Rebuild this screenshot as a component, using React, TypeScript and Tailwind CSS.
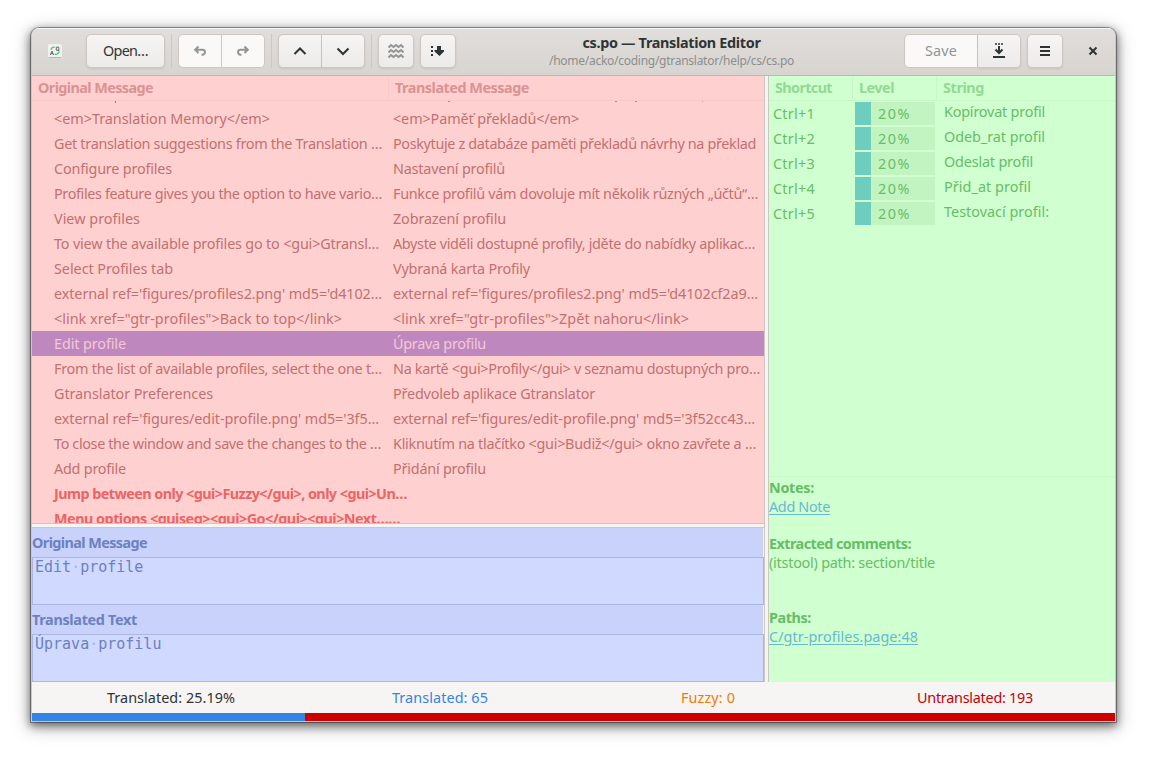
import { useLayoutEffect, useRef, useState } from "react";
import type { ReactNode } from "react";

/* Text whose tracking is adjusted so that it spans exactly `w` pixels. */
function Fit({ w, className = "", children }: { w: number; className?: string; children: string }) {
  const ref = useRef<HTMLSpanElement>(null);
  const [spacing, setSpacing] = useState(0);
  useLayoutEffect(() => {
    const el = ref.current;
    if (!el) return;
    el.style.letterSpacing = "0px";
    setSpacing((w - el.getBoundingClientRect().width) / children.length);
  }, [w, children]);
  return (
    <span ref={ref} className={`inline-block whitespace-pre ${className}`} style={{ letterSpacing: `${spacing}px` }}>
      {children}
    </span>
  );
}

type Row = [string, number, string, number];

const rows: Row[] = [
  ["<em>Translation Memory</em>", 216, "<em>Paměť překladů</em>", 186],
  ["Get translation suggestions from the Translation …", 328, "Poskytuje z databáze paměti překladů návrhy na překlad", 363],
  ["Configure profiles", 118, "Nastavení profilů", 112],
  ["Profiles feature gives you the option to have vario…", 328, "Funkce profilů vám dovoluje mít několik různých „účtů“…", 365],
  ["View profiles", 86, "Zobrazení profilu", 113],
  ["To view the available profiles go to <gui>Gtransl…", 325, "Abyste viděli dostupné profily, jděte do nabídky aplikac…", 362],
  ["Select Profiles tab", 119, "Vybraná karta Profily", 137],
  ["external ref='figures/profiles2.png' md5='d4102…", 328, "external ref='figures/profiles2.png' md5='d4102cf2a9…", 365],
  ["<link xref=\"gtr-profiles\">Back to top</link>", 288, "<link xref=\"gtr-profiles\">Zpět nahoru</link>", 296],
  ["Edit profile", 72, "Úprava profilu", 93],
  ["From the list of available profiles, select the one t…", 328, "Na kartě <gui>Profily</gui> v seznamu dostupných pro…", 367],
  ["Gtranslator Preferences", 159, "Předvoleb aplikace Gtranslator", 202],
  ["external ref='figures/edit-profile.png' md5='3f5…", 325, "external ref='figures/edit-profile.png' md5='3f52cc43…", 362],
  ["To close the window and save the changes to the …", 327, "Kliknutím na tlačítko <gui>Budiž</gui> okno zavřete a …", 363],
  ["Add profile", 72, "Přidání profilu", 93],
];

const memory: [string, string, number][] = [
  ["Ctrl+1", "Kopírovat profil", 101],
  ["Ctrl+2", "Odeb_rat profil", 101],
  ["Ctrl+3", "Odeslat profil", 89],
  ["Ctrl+4", "Přid_at profil", 87],
  ["Ctrl+5", "Testovací profil:", 105],
];

const face = "border border-[#cdc7c2] bg-linear-to-b from-[#f6f5f4] to-[#edebe9] shadow-[0_1px_2px_rgba(0,0,0,0.09)] text-[#2e3436]";
const faceOff = "border border-[#cdc7c2] bg-[#faf9f8] text-[#929595]";

function Button({ className, children }: { className: string; children: ReactNode }) {
  return <button className={`flex h-[34px] shrink-0 items-center justify-center ${className}`}>{children}</button>;
}

function Separator({ className }: { className: string }) {
  return <div className={`h-[34px] w-px shrink-0 bg-[#cdc8c3] ${className}`} />;
}

function Icon({ children }: { children: ReactNode }) {
  return (
    <svg width="16" height="16" viewBox="0 0 16 16" fill="none" stroke="currentColor" strokeWidth="2">
      {children}
    </svg>
  );
}

function HeaderBar() {
  return (
    <header className="flex h-[48px] shrink-0 items-start border-b border-[#bfb8b1] bg-linear-to-b from-[#e1dedb] to-[#d8d4d0] pt-[6px] shadow-[inset_0_1px_#f8f7f7]">
      <svg className="mt-[10px] ml-[16px] shrink-0" width="14" height="14" viewBox="0 0 14 14" fill="none">
        <rect width="14" height="13.5" rx="1.5" fill="#f1f1ef" />
        <path d="M1 13.5h12" stroke="#86d3ab" />
        <path d="M3 5.8C3.4 4 4.8 3 6.8 3.2M11 7.6C10.8 9.4 9 10.8 6.6 10.2" stroke="#33d17a" strokeWidth="1.3" />
        <path d="M2.200 11L4 7L5.600 11M3 9.700h2" stroke="#5e5c64" strokeWidth="0.9" />
        <path d="M8.300 3.200h2.500v3H8.300zM10 6.200l1.500 1" stroke="#5e5c64" strokeWidth="0.9" />
      </svg>
      <Button className={`ml-[24px] w-[79px] rounded-[5px] ${face}`}>
        <Fit w={45}>Open…</Fit>
      </Button>
      <Separator className="ml-[6px]" />
      <Button className={`ml-[6px] w-[44px] rounded-l-[5px] ${faceOff}`}>
        <Icon>
          <path d="M6.500 3.500L3.200 6.700l3.300 3.300M3.500 6.800H10.500a2.400 2.400 0 0 1 0 4.900H9.500" />
        </Icon>
      </Button>
      <Button className={`w-[43px] rounded-r-[5px] border-l-0 ${faceOff}`}>
        <Icon>
          <path d="M9.500 3.500L12.800 6.700l-3.300 3.300M12.500 6.800H5.500a2.400 2.400 0 0 0 0 4.900H6.500" />
        </Icon>
      </Button>
      <Separator className="ml-[6px]" />
      <Button className={`ml-[6px] w-[44px] rounded-l-[5px] ${face}`}>
        <Icon>
          <path d="M2.500 11L8 5.500L13.500 11" />
        </Icon>
      </Button>
      <Button className={`w-[43px] rounded-r-[5px] border-l-0 ${face}`}>
        <Icon>
          <path d="M2.500 5.500L8 11L13.500 5.500" />
        </Icon>
      </Button>
      <Separator className="ml-[6px]" />
      <Button className={`ml-[6px] w-[36px] rounded-[5px] ${face}`}>
        <svg width="16" height="16" viewBox="0 0 16 16" fill="none" stroke="#929595" strokeWidth="2">
          <path d="M0.500 4.500L3 2L5.500 4L8 2L10.500 4L13 2L15.500 4.500M0.500 9.500L3 7L5.500 9L8 7L10.500 9L13 7L15.500 9.500M0.500 14.500L3 12L5.500 14L8 12L10.500 14L13 12L15.500 14.500" />
        </svg>
      </Button>
      <Button className={`ml-[6px] w-[36px] rounded-[5px] ${face}`}>
        <svg width="16" height="16" viewBox="0 0 16 16" fill="currentColor">
          <path d="M1 3h2v2H1zM1 7h2v2H1zM1 11h2v2H1zM7 3h4v4h3v1.500L9.500 13L4.500 8.500V7H7z" />
        </svg>
      </Button>
      <div className="flex flex-1 flex-col items-center pr-[17px]">
        <Fit w={178} className="leading-[18px] font-bold text-[#2e3436]">cs.po — Translation Editor</Fit>
        <Fit w={245} className="text-[12px] leading-[17px] text-[#8b8e8f]">/home/acko/coding/gtranslator/help/cs/cs.po</Fit>
      </div>
      <Button className={`w-[74px] rounded-l-[5px] ${faceOff}`}>
        <Fit w={32}>Save</Fit>
      </Button>
      <Button className={`w-[43px] rounded-r-[5px] border-l-0 ${face}`}>
        <svg width="16" height="16" viewBox="0 0 16 16" fill="currentColor">
          <path d="M4 0h2v2H4zM7 0h2v2H7zM10 0h2v2h-2z" opacity="0.75" />
          <path d="M2 13h12v2H2z" />
          <path d="M8 3v7M4.500 6.500L8 10L11.500 6.500" fill="none" stroke="currentColor" strokeWidth="2" />
        </svg>
      </Button>
      <Button className={`ml-[6px] w-[36px] rounded-[5px] ${face}`}>
        <Icon>
          <path d="M3 4h10M3 8h10M3 12h10" />
        </Icon>
      </Button>
      <Button className="mr-[14px] ml-[22px] w-[16px] text-[#2e3436]">
        <Icon>
          <path d="M4.500 4.500L11.500 11.500M11.500 4.500L4.500 11.500" />
        </Icon>
      </Button>
    </header>
  );
}

function MessageTable() {
  return (
    <section className="flex h-[448px] shrink-0 flex-col overflow-hidden border-b border-[#cdc7c2] bg-[#ffd0d0] text-[#c17070]">
      <div className="flex h-[25px] shrink-0 items-center border-b border-[#f9c9c8] font-bold text-[#d99393]">
        <div className="flex h-full w-[357px] items-center border-r border-[#f9c9c8] pl-[6px]">
          <Fit w={115}>Original Message</Fit>
        </div>
        <div className="pl-[6px]">
          <Fit w={134}>Translated Message</Fit>
        </div>
      </div>
      <div className="flex h-[5px] shrink-0 items-start">
        <span className="ml-[83px] h-[2px] w-px bg-[#c17070]" />
        <span className="ml-[332px] h-px w-[2px] bg-[#c98080]" />
        <span className="ml-[165px] h-px w-[2px] bg-[#c98080]" />
        <span className="ml-[18px] h-px w-[2px] bg-[#c98080]" />
        <span className="ml-[65px] h-px w-px bg-[#e0a0a0]" />
      </div>
      {rows.map(([a, wa, b, wb]) => (
        <div
          key={a}
          className={`flex h-[25px] shrink-0 items-center pl-[22px] ${a === "Edit profile" ? "bg-[#be88be] text-[#f3c8d8]" : ""}`}
        >
          <div className="w-[339px]">
            <Fit w={wa}>{a}</Fit>
          </div>
          <Fit w={wb}>{b}</Fit>
        </div>
      ))}
      <div className="flex h-[25px] shrink-0 items-center pl-[22px] font-bold text-[#ec6464]">
        <Fit w={353}>{"Jump between only <gui>Fuzzy</gui>, only <gui>Un…"}</Fit>
      </div>
      <div className="flex h-[25px] shrink-0 items-center pl-[22px] font-bold text-[#ec6464]">
        <Fit w={346}>{"Menu options <guiseq><gui>Go</gui><gui>Next……"}</Fit>
      </div>
    </section>
  );
}

function Editor({ label, lw, words }: { label: string; lw: number; words: [string, string] }) {
  return (
    <div className="flex h-[77px] flex-col">
      <div className="mr-px flex h-[29px] shrink-0 items-center bg-[#c9d2fa] font-bold text-[#6d80c0]">
        <Fit w={lw}>{label}</Fit>
      </div>
      <div className="flex-1 border border-[#aab6e4] bg-[#d0d9ff] pl-[2px] font-['DejaVu_Sans_Mono',monospace] text-[15px] leading-[19px] text-[#6d80c0]">
        <span>{words[0]}</span>
        <span className="text-[#a9b5e4]">·</span>
        <span>{words[1]}</span>
      </div>
    </div>
  );
}

function SidePanel() {
  return (
    <aside className="flex flex-1 flex-col border-l border-[#cdc7c2] bg-[#d0ffd0] text-[#67bd67]">
      <div className="flex h-[401px] shrink-0 flex-col border-b border-[#c8f6c7]">
        <div className="flex h-[25px] shrink-0 items-center border-b border-[#c8f6c7] font-bold text-[#93d893]">
          <div className="flex h-full w-[84px] items-center border-r border-[#c8f6c7] pl-[6px]">
            <Fit w={57}>Shortcut</Fit>
          </div>
          <div className="flex h-full w-[84px] items-center border-r border-[#c8f6c7] pl-[6px]">
            <Fit w={35}>Level</Fit>
          </div>
          <div className="pl-[6px]">
            <Fit w={41}>String</Fit>
          </div>
        </div>
        {memory.map(([key, text, w]) => (
          <div key={key} className="flex h-[25px] shrink-0 items-center pl-[4px]">
            <div className="w-[82px]">
              <Fit w={42}>{key}</Fit>
            </div>
            <div className="flex h-[23px] w-[80px] items-center bg-[#c2f4c2]">
              <div className="h-full w-[16px] bg-[#6dcdbe]" />
              <Fit w={33} className="ml-[7px]">20%</Fit>
            </div>
            <div className="pb-[3px] pl-[9px]">
              <Fit w={w}>{text}</Fit>
            </div>
          </div>
        ))}
      </div>
      <div className="flex flex-col items-start leading-[19px]">
        <Fit w={45} className="mt-[1px] font-bold">Notes:</Fit>
        <Fit w={61} className="text-[#65bad0] underline underline-offset-2">Add Note</Fit>
        <Fit w={142} className="mt-[18px] font-bold">Extracted comments:</Fit>
        <Fit w={166}>(itstool) path: section/title</Fit>
        <Fit w={42} className="mt-[36px] font-bold">Paths:</Fit>
        <Fit w={149} className="text-[#65bad0] underline underline-offset-2">C/gtr-profiles.page:48</Fit>
      </div>
    </aside>
  );
}

function StatusBar() {
  return (
    <footer className="flex h-[39px] shrink-0 flex-col bg-[#f6f5f4]">
      <div className="flex h-[31px] items-center text-[#2e3436]">
        <div className="w-[285px] pl-[75px]">
          <Fit w={128}>Translated: 25.19%</Fit>
        </div>
        <div className="w-[289px] pl-[75px] text-[#3584e4]">
          <Fit w={96}>Translated: 65</Fit>
        </div>
        <div className="w-[236px] pl-[75px] text-[#f57900]">
          <Fit w={54}>Fuzzy: 0</Fit>
        </div>
        <div className="pl-[75px] text-[#cc0000]">
          <Fit w={116}>Untranslated: 193</Fit>
        </div>
      </div>
      <div className="flex h-[8px]">
        <div className="w-[273px] bg-[#3584e4]" />
        <div className="flex-1 bg-[#cc0000]" />
      </div>
    </footer>
  );
}

export default function App() {
  return (
    <main className="h-[760px] w-[1151px] overflow-hidden bg-white px-[31px] pt-[28px] font-['Noto_Sans',sans-serif] text-[14.400px] leading-[20px]">
      <div className="flex h-[694px] w-[1085px] flex-col overflow-hidden rounded-t-[8px] border-x border-b border-[#cdc7c2] bg-[#f6f5f4] shadow-[0_0_0_1px_rgba(0,0,0,0.35),0_3px_9px_1px_rgba(0,0,0,0.5),0_4px_18px_2px_rgba(0,0,0,0.25)]">
        <HeaderBar />
        <div className="flex h-[606px] shrink-0">
          <div className="flex w-[733px] shrink-0 flex-col border-r border-[#cdc7c2]">
            <MessageTable />
            <div className="mt-[3px] flex flex-1 flex-col border-t border-t-[#cdc7c2]">
              <Editor label="Original Message" lw={115} words={["Edit", "profile"]} />
              <Editor label="Translated Text" lw={105} words={["Úprava", "profilu"]} />
            </div>
          </div>
          <div className="w-[3px] shrink-0" />
          <SidePanel />
        </div>
        <StatusBar />
      </div>
    </main>
  );
}
